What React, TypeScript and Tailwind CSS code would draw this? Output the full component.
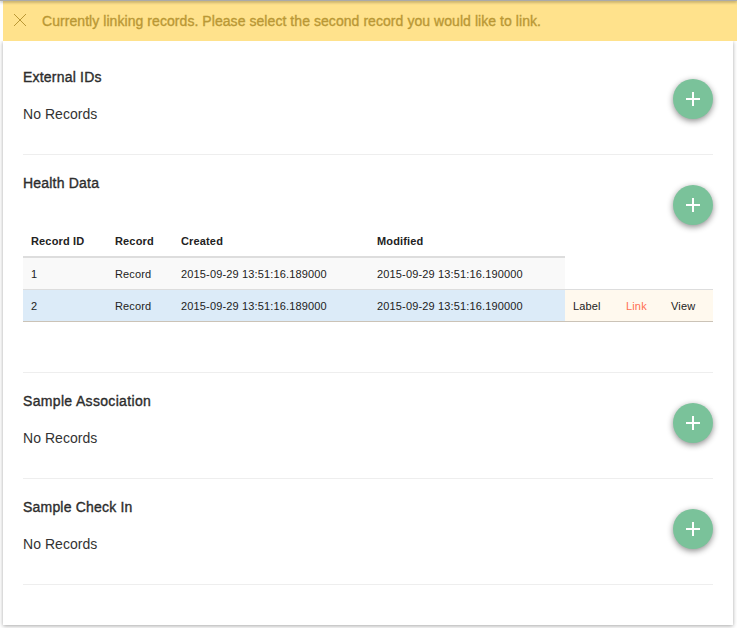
import type { ReactNode } from "react";

function AddButton() {
  return (
    <button className="mt-[30px] flex h-10 w-10 shrink-0 items-center justify-center rounded-full bg-[#7ac29a] shadow-[0_2px_6px_rgba(0,0,0,0.45)]">
      <svg width="14" height="14" viewBox="0 0 14 14" fill="#fff" shapeRendering="crispEdges">
        <path d="M6 0h2v6h6v2H8v6H6V8H0V6h6z" />
      </svg>
    </button>
  );
}

function Section({ title, children, tall, wide }: { title: string; children: ReactNode; tall?: boolean; wide?: boolean }) {
  return (
    <section className={`flex border-b border-[#eeeeee] ${tall ? "h-[218px]" : "h-[106px]"}`}>
      <div className="w-[650px] shrink-0 pt-[18px]">
        <h2 className={`text-sm leading-5 font-normal whitespace-nowrap [-webkit-text-stroke:0.35px_#222] ${wide ? "tracking-[0.33px]" : "tracking-[0.2px]"}`}>{title}</h2>
        {children}
      </div>
      <AddButton />
    </section>
  );
}

function Empty() {
  return <p className="mt-[17px] text-sm leading-5 tracking-[0.05px]">No Records</p>;
}

const cols = "grid grid-cols-[84px_66px_196px_196px] w-[542px] *:pl-2 *:pt-[2px]";

function RecordsTable() {
  return (
    <div className="mt-[32px] w-[690px] text-[11px] tracking-[0.15px] whitespace-nowrap text-[#222222]">
      <div className={`${cols} h-[33px] items-center border-b-2 border-[#dddddd] font-bold`}>
        <span>Record ID</span>
        <span>Record</span>
        <span>Created</span>
        <span>Modified</span>
      </div>
      <div className={`${cols} h-[31px] items-center bg-[#f9f9f9]`}>
        <span>1</span>
        <span>Record</span>
        <span>2015-09-29 13:51:16.189000</span>
        <span>2015-09-29 13:51:16.190000</span>
      </div>
      <div className="flex h-[33px] border-t border-b border-t-[#dddddd] border-b-[#cbc3b7]">
        <div className={`${cols} items-center bg-[#dcebf8]`}>
          <span>2</span>
          <span>Record</span>
          <span>2015-09-29 13:51:16.189000</span>
          <span>2015-09-29 13:51:16.190000</span>
        </div>
        <div className="grid w-[148px] grid-cols-[53px_45px_50px] items-center bg-[#fff9ee] *:pt-[2px] *:pl-2">
          <span>Label</span>
          <span className="text-[#ff7050]">Link</span>
          <span>View</span>
        </div>
      </div>
    </div>
  );
}

export default function App() {
  return (
    <div className="h-[628px] w-[737px] overflow-hidden bg-white font-['Liberation_Sans',Arial,sans-serif] text-[#333333]">
      <div className="relative h-px bg-[#aaaaaa] shadow-[0_1px_3px_rgba(0,0,0,0.6)]" />
      <div className="ml-[3px] flex h-10 items-center bg-[#ffe28c] text-[#ba9835]">
        <svg className="-mt-[2px] ml-[11px]" width="12" height="12" viewBox="0 0 12 12" fill="none" stroke="currentColor" strokeWidth="1">
          <path d="M0 0l12 12M12 0L0 12" />
        </svg>
        <p className="ml-4 text-sm tracking-[0.06px] whitespace-nowrap [-webkit-text-stroke:0.35px_#ba9835]">
          Currently linking records. Please select the second record you would like to link.
        </p>
      </div>
      <main className="ml-[3px] h-[584px] w-[730px] bg-white px-5 pt-2 shadow-[0_1px_4px_rgba(0,0,0,0.35)] [clip-path:inset(0_-4px_-6px_-4px)]">
        <Section title="External IDs"><Empty /></Section>
        <Section title="Health Data" tall><RecordsTable /></Section>
        <Section title="Sample Association" wide><Empty /></Section>
        <Section title="Sample Check In"><Empty /></Section>
      </main>
    </div>
  );
}
